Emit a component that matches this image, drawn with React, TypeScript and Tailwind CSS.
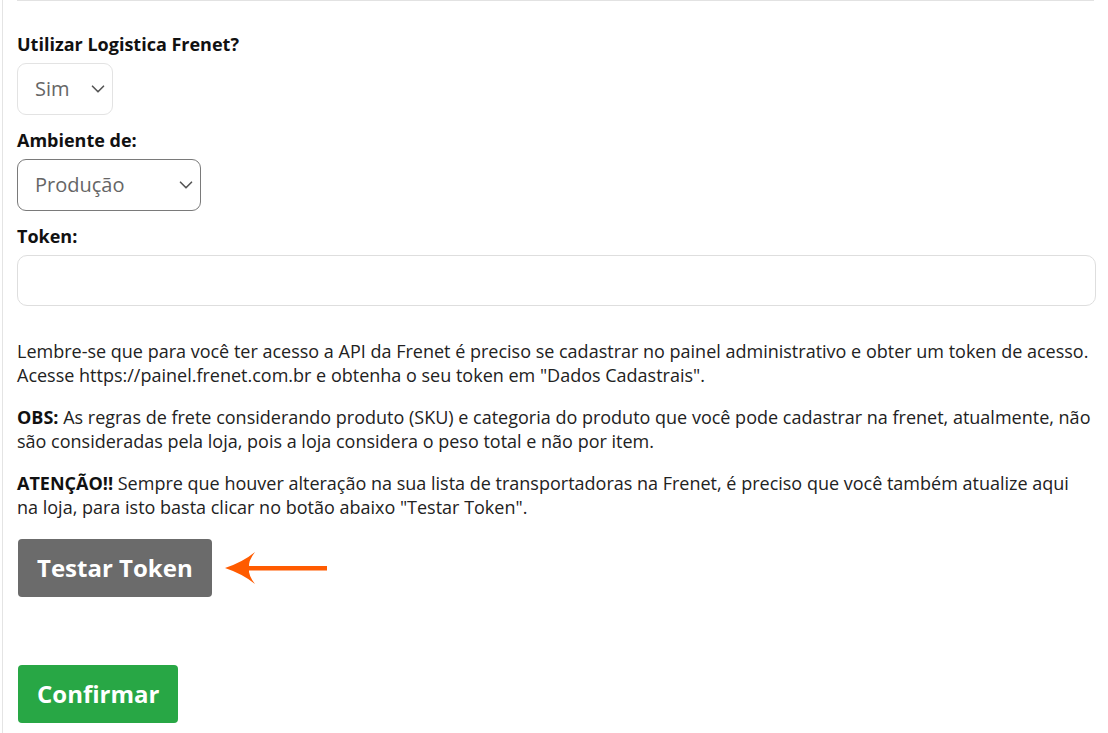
import { ChevronDown } from "lucide-react";

function Label({ children }: { children: React.ReactNode }) {
  return (
    <label className="block text-[18px] leading-[24px] font-bold text-[#111] pt-[3px] mb-[7px]">
      {children}
    </label>
  );
}

function Select({
  value,
  options,
  width,
  dark,
}: {
  value: string;
  options: string[];
  width: string;
  dark?: boolean;
}) {
  return (
    <div className={`relative ${width} mb-[10px]`}>
      <select
        defaultValue={value}
        className={`appearance-none w-full h-[52px] rounded-[9px] bg-white pl-[17px] pr-8 text-[20px] text-[#666] outline-none border ${
          dark ? "border-[#7a7a7a]" : "border-[#e3e3e3]"
        }`}
      >
        {options.map((o) => (
          <option key={o}>{o}</option>
        ))}
      </select>
      <ChevronDown
        className="absolute right-[4px] top-[15px] pointer-events-none text-[#555]"
        size={22}
        strokeWidth={1.8}
      />
    </div>
  );
}

function Arrow() {
  return (
    <svg width="106" height="36" viewBox="0 0 106 36" className="ml-[11px]">
      <rect x="24" y="16" width="80" height="4.5" fill="#ff5b00" />
      <path
        d="M2 18 Q 20 12 32 2 Q 25 11 26 18 Q 25 25 32 34 Q 20 24 2 18 Z"
        fill="#ff5b00"
      />
    </svg>
  );
}

export default function App() {
  return (
    <div
      className="min-h-[733px] bg-white ml-[2px] border-l border-[#e4e4e4] pl-[14px] pr-[12px]"
      style={{ fontFamily: '"Open Sans", "Liberation Sans", sans-serif' }}
    >
      <div className="border-t border-[#e2e2e2] mr-[2px]" />

      <div className="pt-[28px]">
        <Label>Utilizar Logistica Frenet?</Label>
        <Select value="Sim" options={["Sim", "Não"]} width="w-[96px]" />

        <Label>Ambiente de:</Label>
        <Select
          value="Produção"
          options={["Produção", "Homologação"]}
          width="w-[184px]"
          dark
        />

        <Label>Token:</Label>
        <input
          type="text"
          className="block w-full h-[51px] mt-[1px] rounded-[10px] border border-[#dedede] px-4 text-[18px] outline-none"
        />

        <div className="mt-[33px] pr-[4px] text-[18px] leading-[24px] text-[#222] space-y-[18px]">
          <p>
            Lembre-se que para você ter acesso a API da Frenet é preciso se
            cadastrar no painel administrativo e obter um token de acesso.
            Acesse https://painel.frenet.com.br e obtenha o seu token em
            "Dados Cadastrais".
          </p>
          <p>
            <b className="font-bold text-[#111]">OBS:</b> As regras de frete
            considerando produto (SKU) e categoria do produto que você pode
            cadastrar na frenet, atualmente, não são consideradas pela loja,
            pois a loja considera o peso total e não por item.
          </p>
          <p>
            <b className="font-bold text-[#111]">ATENÇÃO!!</b> Sempre que
            houver alteração na sua lista de transportadoras na Frenet, é
            preciso que você também atualize aqui na loja, para isto basta
            clicar no botão abaixo "Testar Token".
          </p>
        </div>

        <div className="flex items-center mt-[20px]">
          <button className="h-[58px] px-[19px] ml-[1px] rounded-[4px] bg-[#6b6b6b] text-white text-[24px] font-bold">
            Testar Token
          </button>
          <Arrow />
        </div>

        <button className="mt-[68px] h-[58px] px-[19px] ml-[1px] rounded-[4px] bg-[#28a745] text-white text-[24px] font-bold">
          Confirmar
        </button>
      </div>
    </div>
  );
}
